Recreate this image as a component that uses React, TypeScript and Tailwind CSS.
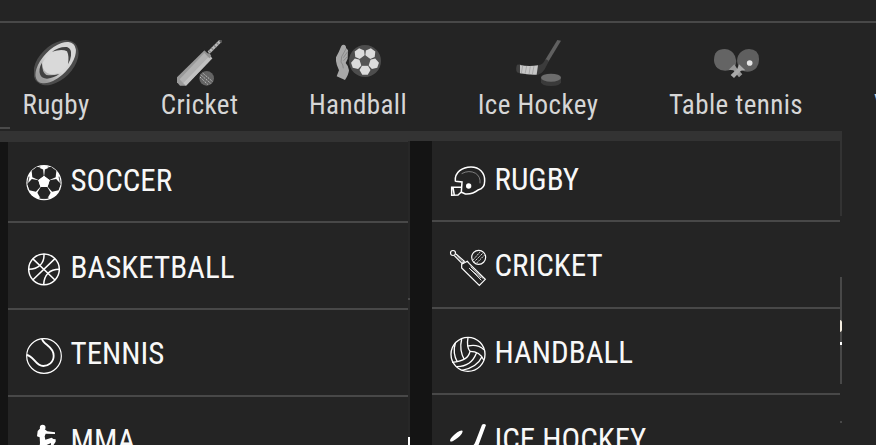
import type { ReactNode } from 'react';

type NavItem = {
  label: string;
  width: string;
  icon: ReactNode;
};

type MenuItem = {
  label: string;
  icon: ReactNode;
  row: string;
};

// Vertices of a regular polygon, angle in degrees
const ngon = (cx: number, cy: number, r: number, sides: number, start: number) =>
  Array.from({ length: sides }, (_, i) => {
    const a = ((start + (360 / sides) * i) * Math.PI) / 180;
    return `${(cx + r * Math.cos(a)).toFixed(1)},${(cy + r * Math.sin(a)).toFixed(1)}`;
  }).join(' ');

const BALL_ANGLES = [-54, 18, 90, 162, 234];

// Five panels placed around a centre pentagon
function BallPanels({ cx, cy, distance, r, fill }: { cx: number; cy: number; distance: number; r: number; fill: string }) {
  return (
    <>
      {BALL_ANGLES.map((deg) => {
        const a = (deg * Math.PI) / 180;
        return (
          <polygon
            key={deg}
            points={ngon(cx + distance * Math.cos(a), cy + distance * Math.sin(a), r, 6, deg + 30)}
            fill={fill}
          />
        );
      })}
    </>
  );
}

/* ---------- Top navigation icons ---------- */

function NavSvg({ children }: { children: ReactNode }) {
  return (
    <svg viewBox="0 0 135 138" className="w-[45px] h-[46px] shrink-0">
      {children}
    </svg>
  );
}

const navRugby = (
  <NavSvg>
    <defs>
      <linearGradient id="rugby-shade" x1="0" y1="0" x2="1" y2="0">
        <stop offset="0.1" stopColor="#9c9c9c" />
        <stop offset="0.45" stopColor="#d6d6d6" />
      </linearGradient>
    </defs>
    <ellipse cx="66" cy="68" rx="81" ry="51" transform="rotate(-45 66 68)" fill="#4b4b4b" />
    <ellipse cx="65" cy="68" rx="77" ry="40" transform="rotate(-46 65 68)" fill="url(#rugby-shade)" />
    <path d="M24 72 Q28 98 48 102 Q70 105 84 94 Q102 80 103 64 Q106 40 96 34 Q70 28 55 38 Q34 50 24 72Z" fill="#d9d9d9" />
    <path d="M54 35 Q76 19 99 21 Q114 26 111 47 Q109 62 102 73 Q106 48 99 34 Q84 26 54 35Z" fill="#414141" />
    <path d="M24 68 Q13 86 18 103 Q23 116 39 116 Q61 113 76 102 Q55 108 37 105 Q24 98 24 68Z" fill="#414141" />
  </NavSvg>
);

const navCricket = (
  <NavSvg>
    <path d="M95 38 L131 2" stroke="#b9b9b9" strokeWidth="9" />
    <path d="M97 36 L134 -1" stroke="#858585" strokeWidth="9" strokeDasharray="4 7" />
    <circle cx="132" cy="4" r="4" fill="#555" />
    <path d="M81 32 L106 55 L27 137 L9 137 L0 127 L0 112Z" fill="#9a9a9a" />
    <path d="M85 36 L97 48 L18 129 L8 118Z" fill="#b2b2b2" />
    <path d="M97 48 L106 55 L27 137 L18 129Z" fill="#c2c2c2" />
    <path d="M82 31 L91 40 Q100 39 103 49 L97 55 L80 37Z" fill="#929292" />
    <circle cx="89" cy="115" r="22" fill="#646464" />
    <g stroke="#d8d8d8" strokeWidth="2.5" strokeDasharray="4 3">
      <path d="M77 99 L106 124" />
      <path d="M71 104 L101 130" />
      <path d="M69 111 L93 134" />
    </g>
  </NavSvg>
);

const navHandball = (
  <NavSvg>
    <path d="M16 18 Q20 13 26 15 Q31 18 30 25 L36 30 L35 56 L29 69 Q38 78 39 91 Q38 104 27 120 L2 109 L9 91 Q-2 70 0 52 Q8 38 16 18Z" fill="#a8a8a8" />
    <path d="M31 25 L17 50 L15 66 Q22 74 22 85 M35 35 L22 53 M35 49 L23 62" stroke="#828282" strokeWidth="2.5" fill="none" />
    <circle cx="87" cy="63" r="48" fill="#4d4d4d" />
    <BallPanels cx={87} cy={63} distance={27} r={16.5} fill="#dcdcdc" />
    <polygon points={ngon(87, 63, 18, 5, -90)} fill="#555" />
  </NavSvg>
);

const navHockey = (
  <NavSvg>
    <path d="M124 0 L135 2 L97 65 L87 61Z" fill="#606060" />
    <path d="M89 57 L99 63 L86 88 Q76 104 61 105 L63 76 Q77 76 83 67Z" fill="#3b3b3b" />
    <path d="M3 74 L15 73 L15 101 L3 97 Q-2 88 3 74Z" fill="#404040" />
    <path d="M12 75 Q38 81 66 76 L62 104 Q37 105 12 100Z" fill="#c6c6c6" />
    <path d="M20 77 L16 100 M32 78 L27 102 M43 79 L39 103 M54 78 L49 103" stroke="#8a8a8a" strokeWidth="1.5" />
    <path d="M75 112 V127 Q77 138 105 138 Q133 138 135 127 V112Z" fill="#3a3a3a" />
    <ellipse cx="105" cy="113" rx="30" ry="12" fill="#6c6c6c" />
  </NavSvg>
);

const navTableTennis = (
  <NavSvg>
    <path d="M0 60 Q0 27 32 27 Q54 28 63 48 Q69 62 65 76 L46 91 Q23 96 10 84 Q0 74 0 60Z" fill="#646464" />
    <path d="M135 60 Q136 28 105 27 Q81 28 72 48 Q66 63 73 77 L90 94 Q113 98 127 84 Q135 74 135 60Z" fill="#5f5f5f" />
    <path d="M61 73 L44 89 L58 91 L75 112 L85 103 L68 84Z" fill="#989898" />
    <path d="M75 73 L94 91 L81 92 L60 114 L50 105 L70 86Z" fill="#aaa" />
    <circle cx="107" cy="69" r="8.5" fill="#e6e6e6" />
  </NavSvg>
);

/* ---------- Menu icons ---------- */

function MenuSvg({ children }: { children: ReactNode }) {
  return (
    <svg viewBox="0 0 108 108" className="w-9 h-9 shrink-0 overflow-visible" fill="none" stroke="#fff" strokeWidth="4.5">
      {children}
    </svg>
  );
}

const menuSoccer = (
  <MenuSvg>
    <g stroke="none">
      <circle cx="54" cy="53" r="53" fill="#fff" />
      <BallPanels cx={54} cy={51} distance={32} r={20} fill="#242424" />
      <polygon points={ngon(54, 51, 18, 5, -90)} fill="#fff" />
    </g>
    <g stroke="#242424" strokeWidth="2.5">
      <path d="M40 99 Q54 103 68 99 M8 66 Q3 50 9 35 M100 66 Q105 50 99 35 M24 15 Q34 7 43 6 M84 15 Q74 7 65 6" />
    </g>
  </MenuSvg>
);

const menuBasketball = (
  <MenuSvg>
    <g transform="translate(0 -2)">
      <circle cx="54" cy="54" r="46" />
      <path d="M20 22 L87 86 M87 22 L20 86" />
      <path d="M54 8 Q55 30 43 41 Q30 54 8 54" />
      <path d="M100 54 Q78 54 66 66 Q54 78 53 100" />
    </g>
  </MenuSvg>
);

const menuTennis = (
  <MenuSvg>
    <circle cx="54" cy="54" r="52" strokeWidth="3.5" />
    <path d="M48 2 C50 20 83 24 83 53 C83 73 67 84 52 84 C28 84 24 54 2 51" strokeWidth="5.5" />
  </MenuSvg>
);

const menuMma = (
  <MenuSvg>
    <g fill="#fff" stroke="none">
      <circle cx="50" cy="8" r="8.5" />
      <path d="M43 10 L52 14 L58 14 L64 19 L87 22 L87 27 L59 26 L56 34 L58 44 L77 38 L82 42 L89 43 L89 50 L80 64 L74 66 L75 54 L62 60 L52 84 L38 84 L42 54 L41 37 L33 34 L35 18Z" />
    </g>
  </MenuSvg>
);

const menuRugby = (
  <MenuSvg>
    <path d="M16 52 C13 24 38 9 63 9 C89 9 105 27 104 51 C104 67 95 75 86 77 C72 88 59 91 46 90 L33 84 M16 52 L36 54 L34 84 M36 69 L5 70 L5 94 L24 93 L34 84 M9 70 L13 94" />
    <path d="M35 29 Q57 17 77 28 Q92 38 90 58" strokeWidth="2" stroke="#aaa" />
    <circle cx="56" cy="66" r="8" fill="#fff" stroke="none" />
  </MenuSvg>
);

const menuCricket = (
  <MenuSvg>
    <g strokeWidth="3.5">
      <circle cx="9" cy="9" r="7.5" />
      <path d="M13 17 L36 40 L43 34 L18 12" />
      <path d="M21 19 L39 37" strokeWidth="2" />
      <path d="M35 43 L52 34 L58 41 L106 88 L88 106 L35 54Z" />
      <path d="M57 54 L94 91 M62 50 L100 86 M61 58 L93 84" strokeWidth="2.5" />
      <circle cx="86" cy="22" r="21" />
      <path d="M73 35 L99 9 M68 31 L91 5 M80 39 L104 15" strokeWidth="2.5" strokeDasharray="5 2" />
    </g>
  </MenuSvg>
);

const menuHandball = (
  <MenuSvg>
    <g strokeWidth="4">
      <circle cx="54" cy="52" r="51" />
      <path d="M54 2 Q49 30 60 43 M35 6 Q27 39 43 68 M16 18 Q7 48 22 75 M60 43 Q55 72 6 76" />
      <path d="M54 27 Q82 20 102 38 M60 43 Q90 43 101 69 M19 89 Q63 90 79 49 M36 100 Q82 90 96 59" />
    </g>
  </MenuSvg>
);

const menuHockey = (
  <MenuSvg>
    <g fill="#fff" stroke="none">
      <ellipse cx="19" cy="36" rx="24" ry="7" transform="rotate(-40 19 36)" />
      <path d="M96 2 Q103 -2 108 3 L88 57 Q82 76 66 76 L64 66 Q72 65 76 54Z" />
    </g>
  </MenuSvg>
);

const navItems: NavItem[] = [
  { label: 'Rugby', width: 'w-[68px]', icon: navRugby },
  { label: 'Cricket', width: 'w-[77px]', icon: navCricket },
  { label: 'Handball', width: 'w-[98px]', icon: navHandball },
  { label: 'Ice Hockey', width: 'w-[120px]', icon: navHockey },
  { label: 'Table tennis', width: 'w-[134px]', icon: navTableTennis },
  { label: 'Volleyball', width: 'w-auto', icon: null },
];

const leftMenu: MenuItem[] = [
  { label: 'SOCCER', icon: menuSoccer, row: 'h-[81px] pb-[20px]' },
  { label: 'BASKETBALL', icon: menuBasketball, row: 'h-[87px] pb-[20px]' },
  { label: 'TENNIS', icon: menuTennis, row: 'h-[87px] pb-[21px]' },
  { label: 'MMA', icon: menuMma, row: 'h-[87px] pb-[21px]' },
];

const rightMenu: MenuItem[] = [
  { label: 'RUGBY', icon: menuRugby, row: 'h-[81px] pb-[20px]' },
  { label: 'CRICKET', icon: menuCricket, row: 'h-[87px] pb-[21px]' },
  { label: 'HANDBALL', icon: menuHandball, row: 'h-[86px] pb-[20px]' },
  { label: 'ICE HOCKEY', icon: menuHockey, row: 'h-[87px] pb-[20px]' },
];

function MenuColumn({ items }: { items: MenuItem[] }) {
  return (
    <ul className="flex flex-col">
      {items.map((item) => (
        <li key={item.label} className={`${item.row} flex items-end shrink-0 gap-[8.5px] pl-[18px] border-b-2 border-[#484848]`}>
          {item.icon}
          <span className="text-[31px] leading-9 text-[#f8f8f8] whitespace-nowrap pb-[2px]">{item.label}</span>
        </li>
      ))}
    </ul>
  );
}

export default function App() {
  return (
    <div className="w-[876px] h-[445px] overflow-hidden flex flex-col bg-[#242424] font-['Roboto_Condensed','Roboto',sans-serif] [font-stretch:75%]">
      <div className="h-[23px] shrink-0 border-b-2 border-[#484848]" />

      <nav className="h-[108px] shrink-0 flex gap-[71px] pl-[22px] pt-[17px]">
        {navItems.map((item) => (
          <div key={item.label} className={`${item.width} shrink-0 flex flex-col items-center`}>
            <div className="h-[47px]">{item.icon}</div>
            <span className="text-[27px] leading-9 tracking-[0.42px] text-[#d6d6d6] whitespace-nowrap">{item.label}</span>
          </div>
        ))}
      </nav>

      <div className="relative h-[314px] shrink-0">
        <div className="absolute left-0 -top-1 w-[10px] h-[2px] bg-[#4a4a4a]" />
        <div className="w-[842px] h-[10px] bg-[#333333]" />
        <div className="flex h-[304px]">
          <div className="w-2 bg-[#141414] border-t border-[#333333]" />
          <div className="w-[400px] border-t border-[#333333]">
            <MenuColumn items={leftMenu} />
          </div>
          <div className="w-[2px] bg-[#272727]" />
          <div className="w-[22px] bg-[#141414]" />
          <div className="w-[408px]">
            <MenuColumn items={rightMenu} />
          </div>
          <div className="w-[2px] flex flex-col">
            <div className="h-[75px] bg-[#333333]" />
            <div className="h-[61px]" />
            <div className="h-[43px] bg-[#484848]" />
            <div className="h-[12px] bg-[#f5eee0] rounded-r-sm" />
            <div className="h-[10px] bg-[#484848]" />
            <div className="h-[3px] bg-white" />
            <div className="h-[39px] bg-[#484848]" />
            <div className="h-[37px]" />
            <div className="h-[2px] bg-[#484848]" />
          </div>
        </div>
        <div className="absolute left-[408px] top-[167px] w-[2px] h-[2px] bg-[#484848]" />
        <div className="absolute left-[408px] top-[306px] w-[2px] h-[8px] bg-white" />
      </div>
    </div>
  );
}
